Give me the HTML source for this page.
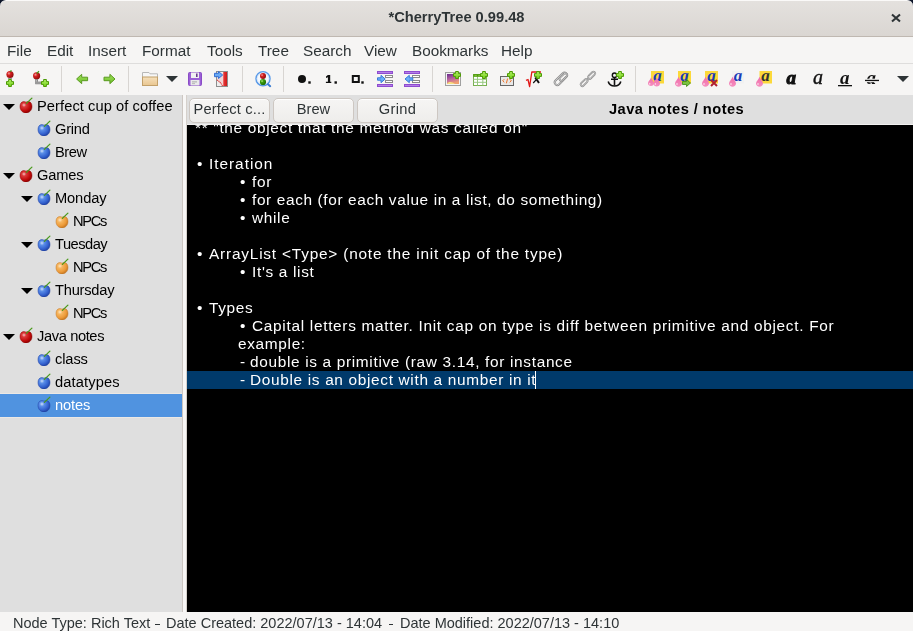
<!DOCTYPE html>
<html><head><meta charset="utf-8">
<style>
*{margin:0;padding:0;box-sizing:border-box}
html,body{width:913px;height:631px;overflow:hidden;background:#f6f5f4;font-family:"Liberation Sans",sans-serif;color:#2e3436}
.a{position:absolute}
.g{will-change:transform}
#title{left:0;top:0;width:913px;height:37px;background:linear-gradient(#e4e1de,#dad6d2);border-top:1px solid #faf9f8;border-bottom:1px solid #bfb8b1;border-radius:6px 6px 0 0}
#corner{left:0;top:0;width:913px;height:6px;background:#0c1428}
#ttext{left:0;top:9px;width:913px;text-align:center;font-weight:bold;font-size:14.67px;color:#2e3436}
#menu{left:0;top:37px;width:913px;height:27px;background:#f6f5f4;border-bottom:1px solid #dedddc}
.mi{top:42px;font-size:15.3px;color:#2e3436}
#tb{left:0;top:64px;width:913px;height:31px;background:#f6f5f4}
#tree{left:0;top:95px;width:182px;height:517px;background:#dfdfdf}
.tt{font-size:14.67px;line-height:22px;white-space:pre;color:#000}
#pane1{left:182px;top:95px;width:1px;height:517px;background:#cdc7c2}
#pane2{left:183px;top:95px;width:3px;height:517px;background:#f8f7f6}
#pane3{left:186px;top:95px;width:1px;height:517px;background:#d5d0cb}
#rhead{left:187px;top:95px;width:726px;height:30px;background:#dfdfdf}
.btn{top:98px;height:25px;border:1px solid #cdc7c2;border-radius:5px;background:linear-gradient(#f6f5f4,#eeedeb);box-shadow:inset 0 1px #fff}
.bt{top:99px;height:23px;font-size:14.67px;text-align:center;color:#2e3436;line-height:20px}
#edit{left:187px;top:125px;width:726px;height:487px;background:#000;overflow:hidden}
.ln{height:18px;font-size:15.4px;line-height:18px;color:#fff;white-space:pre;letter-spacing:0.67px}
#status{left:0;top:612px;width:913px;height:19px;background:#f6f5f4}
.st{top:615px;font-size:14.5px;color:#2e3436;white-space:pre}
</style></head><body>
<svg width="0" height="0" style="position:absolute">
<defs>
<radialGradient id="gr" cx="0.33" cy="0.3" r="0.8"><stop offset="0" stop-color="#f4c4c4"/><stop offset="0.22" stop-color="#dc3a3a"/><stop offset="0.65" stop-color="#c00a0a"/><stop offset="1" stop-color="#7a0000"/></radialGradient>
<radialGradient id="gb" cx="0.33" cy="0.3" r="0.8"><stop offset="0" stop-color="#d0e0f8"/><stop offset="0.25" stop-color="#5a8ee8"/><stop offset="0.65" stop-color="#3462d0"/><stop offset="1" stop-color="#1a3a98"/></radialGradient>
<radialGradient id="go" cx="0.33" cy="0.3" r="0.8"><stop offset="0" stop-color="#fde8c8"/><stop offset="0.25" stop-color="#f6b660"/><stop offset="0.65" stop-color="#ec9a38"/><stop offset="1" stop-color="#b86a18"/></radialGradient>
<symbol id="chr" viewBox="0 0 16 16"><path d="M8 5.2C6 3.9 2 4.5 2 9.5 2 13.5 5 16 8 16s6-2.5 6-6.5C14 4.5 10 3.9 8 5.2Z" fill="url(#gr)" stroke="#900a0a" stroke-width="0.5"/><path d="M8.4 6.4L13.9 1.1" stroke="#4a9a1c" stroke-width="1.3" stroke-linecap="round"/></symbol>
<symbol id="chb" viewBox="0 0 16 16"><path d="M8 5.2C6 3.9 2 4.5 2 9.5 2 13.5 5 16 8 16s6-2.5 6-6.5C14 4.5 10 3.9 8 5.2Z" fill="url(#gb)" stroke="#2040a0" stroke-width="0.5"/><path d="M8.4 6.4L13.9 1.1" stroke="#4a9a1c" stroke-width="1.3" stroke-linecap="round"/></symbol>
<symbol id="cho" viewBox="0 0 16 16"><path d="M8 5.2C6 3.9 2 4.5 2 9.5 2 13.5 5 16 8 16s6-2.5 6-6.5C14 4.5 10 3.9 8 5.2Z" fill="url(#go)" stroke="#c07a30" stroke-width="0.5"/><path d="M8.4 6.4L13.9 1.1" stroke="#4a9a1c" stroke-width="1.3" stroke-linecap="round"/></symbol>
</defs></svg>

<div class="a" id="corner"></div>
<div class="a" id="title"></div>
<div class="a g" id="ttext">*CherryTree 0.99.48</div>
<svg class="a" style="left:888px;top:10px" width="16" height="16"><path d="M4 4.5L12 11.5M12 4.5L4 11.5" stroke="#2e3436" stroke-width="2.1"/></svg>
<div class="a" id="menu"></div>
<div class="a g mi" style="left:6.5px">File</div>
<div class="a g mi" style="left:46.5px">Edit</div>
<div class="a g mi" style="left:88px">Insert</div>
<div class="a g mi" style="left:142px">Format</div>
<div class="a g mi" style="left:206.5px">Tools</div>
<div class="a g mi" style="left:257.5px">Tree</div>
<div class="a g mi" style="left:303px">Search</div>
<div class="a g mi" style="left:364px">View</div>
<div class="a g mi" style="left:412px">Bookmarks</div>
<div class="a g mi" style="left:501px">Help</div>
<div class="a" id="tb"></div>
<svg class="a" style="left:0;top:64px" width="913" height="31" viewBox="0 64 913 31">
<defs>
<linearGradient id="pg" x1="0" y1="0" x2="0" y2="1"><stop offset="0" stop-color="#b4f06a"/><stop offset="1" stop-color="#73d216"/></linearGradient>
<symbol id="plus" viewBox="0 0 8 8" overflow="visible"><path d="M2.6 0.5h2.8v2.1h2.1v2.8h-2.1v2.1h-2.8v-2.1h-2.1v-2.8h2.1z" fill="url(#pg)" stroke="#4e9a06" stroke-width="1"/></symbol>
<radialGradient id="tr" cx="0.35" cy="0.35" r="0.7"><stop offset="0" stop-color="#f5a0a0"/><stop offset="0.35" stop-color="#d42020"/><stop offset="1" stop-color="#8c0a0a"/></radialGradient>
<radialGradient id="tg" cx="0.35" cy="0.35" r="0.7"><stop offset="0" stop-color="#b0f080"/><stop offset="0.35" stop-color="#3a9a10"/><stop offset="1" stop-color="#1a6a00"/></radialGradient>
<linearGradient id="arr" x1="0" y1="0" x2="0" y2="1"><stop offset="0" stop-color="#a0dc60"/><stop offset="0.5" stop-color="#86d040"/><stop offset="1" stop-color="#6cbc2c"/></linearGradient>
<linearGradient id="fold" x1="0" y1="0" x2="0" y2="1"><stop offset="0" stop-color="#f6e0bc"/><stop offset="1" stop-color="#e9c690"/></linearGradient>
<linearGradient id="img" x1="0" y1="0" x2="0.3" y2="1"><stop offset="0" stop-color="#6a2a90"/><stop offset="0.6" stop-color="#c06aa0"/><stop offset="1" stop-color="#f0a070"/></linearGradient>
<linearGradient id="pink" x1="0" y1="0" x2="0" y2="1"><stop offset="0" stop-color="#f06aa8"/><stop offset="1" stop-color="#f590c0"/></linearGradient>
<symbol id="drop" viewBox="0 0 7 10" overflow="visible"><path d="M3.5 0C3 2.5 0 4.5 0 6.7 0 8.6 1.6 10 3.5 10S7 8.6 7 6.7C7 4.5 4 2.5 3.5 0Z" fill="url(#pink)"/><ellipse cx="2" cy="7.3" rx="0.8" ry="1.1" fill="#fbd0e4"/></symbol>
</defs>
<!-- node add -->
<circle cx="10" cy="74.5" r="3.6" fill="url(#tr)"/>
<path d="M10 71.5l1.5-1" stroke="#3c9a1c" stroke-width="1.2"/>
<rect x="8" y="78" width="4" height="1" fill="#999"/>
<use href="#plus" x="6" y="79" width="8" height="8"/>
<!-- subnode add -->
<circle cx="36.6" cy="75.8" r="3.6" fill="url(#tr)"/>
<path d="M36.8 73.5l2.2-2.3" stroke="#3c9a1c" stroke-width="1.2"/>
<rect x="35.3" y="79" width="1.2" height="5" fill="#777"/>
<rect x="37" y="79" width="1" height="3" fill="#888"/>
<rect x="35.3" y="81.5" width="6.5" height="2.8" fill="#999"/>
<use href="#plus" x="41" y="79" width="8" height="8"/>
<rect x="61" y="66" width="1" height="26" fill="#d8d5d2"/>
<!-- arrows -->
<path d="M76.6 79L81.7 74.3V77.2H87.6V80.7H81.7V83.7Z" fill="url(#arr)" stroke="#5a9a20" stroke-width="1" stroke-linejoin="round"/>
<path d="M76.6 79L81.7 74.3V77.2H87.6V80.7H81.7V83.7Z" transform="translate(191.6 0) scale(-1 1)" fill="url(#arr)" stroke="#5a9a20" stroke-width="1" stroke-linejoin="round"/>
<rect x="128" y="66" width="1" height="26" fill="#d8d5d2"/>
<!-- folder -->
<path d="M142.5 85.5V72.5H149L150 73.8H157.5V85.5Z" fill="#f7f7f7" stroke="#b8b8b8" stroke-width="1"/>
<rect x="142.5" y="77" width="15" height="8.5" fill="url(#fold)" stroke="#c2a06a" stroke-width="1"/>
<path d="M166 76H178L172 82Z" fill="#2e3436"/>
<!-- floppy -->
<rect x="188.5" y="72.5" width="13" height="13" rx="1" fill="#9b5fd6" stroke="#8a4cc6" stroke-width="1"/>
<rect x="191" y="72.5" width="8" height="5.5" fill="#f0f0f0"/>
<rect x="196" y="73.5" width="1.6" height="3.5" fill="#6a3a90"/>
<rect x="190.5" y="80" width="9" height="5.5" fill="#eaeaea"/>
<rect x="192" y="81.5" width="5" height="0.8" fill="#999"/>
<rect x="192" y="83.3" width="3" height="0.8" fill="#aaa"/>
<!-- export -->
<linearGradient id="redb" x1="0" y1="0" x2="1" y2="0"><stop offset="0" stop-color="#f08080"/><stop offset="0.35" stop-color="#e03030"/><stop offset="1" stop-color="#d01818"/></linearGradient>
<rect x="216.5" y="71.5" width="11" height="15" fill="#eeeeee" stroke="#8e8e8e" stroke-width="1"/>
<path d="M217 78L223 73V86Z" fill="#f2d4d4"/>
<rect x="223" y="72" width="4" height="14" fill="url(#redb)"/>
<path d="M217 80Q220.5 82 222.5 86" stroke="#e03030" stroke-width="1.1" fill="none" stroke-dasharray="1.2 0.6"/>
<path d="M214.5 73.3H218.5V71.5L222.7 75L218.5 78.5V76.7H214.5Z" fill="#6aaaf4" stroke="#2a66d0" stroke-width="0.9" stroke-linejoin="round"/>
<rect x="242" y="66" width="1" height="26" fill="#d8d5d2"/>
<!-- find -->
<circle cx="263" cy="78.7" r="7" fill="#f4f8fd" stroke="#5a9ae8" stroke-width="1.5"/>
<circle cx="263" cy="78.7" r="5.9" fill="none" stroke="#cfe2f8" stroke-width="0.8"/>
<path d="M268 84.3l2.2 1.9" stroke="#3a7ad0" stroke-width="2" stroke-linecap="round"/>
<circle cx="263" cy="76" r="3" fill="url(#tr)"/>
<circle cx="263" cy="82" r="3.1" fill="url(#tg)"/>
<rect x="283" y="66" width="1" height="26" fill="#d8d5d2"/>
<!-- list icons -->
<circle cx="302" cy="79" r="4" fill="#111"/>
<rect x="308.3" y="81.3" width="2.4" height="2.4" fill="#111"/>
<path d="M327.9 75H330.2V81.7H331.3V83H325.9V81.7H327.9V77.3L326 78V76.5Z" fill="#111"/>
<rect x="334.5" y="81.3" width="2.4" height="2.4" fill="#111"/>
<rect x="352.8" y="76" width="6" height="6" fill="none" stroke="#111" stroke-width="2"/>
<rect x="361.3" y="81.3" width="2.4" height="2.4" fill="#111"/>
<!-- indent -->
<rect x="377.5" y="71.5" width="15" height="2" fill="#b47ee6" stroke="#8e4cd0" stroke-width="1"/>
<rect x="377.5" y="84.5" width="15" height="2" fill="#b47ee6" stroke="#8e4cd0" stroke-width="1"/>
<rect x="385.5" y="75.5" width="7" height="2" fill="#fff" stroke="#8a8a8a" stroke-width="1"/>
<rect x="385.5" y="80.5" width="7" height="2" fill="#fff" stroke="#8a8a8a" stroke-width="1"/>
<path d="M377.5 77.8H381V75.3L385.2 79L381 82.7V80.2H377.5Z" fill="#6ab0f8" stroke="#3a7ad8" stroke-width="1" stroke-linejoin="round"/>
<rect x="404.5" y="71.5" width="15" height="2" fill="#b47ee6" stroke="#8e4cd0" stroke-width="1"/>
<rect x="404.5" y="84.5" width="15" height="2" fill="#b47ee6" stroke="#8e4cd0" stroke-width="1"/>
<rect x="412.5" y="75.5" width="7" height="2" fill="#fff" stroke="#8a8a8a" stroke-width="1"/>
<rect x="412.5" y="80.5" width="7" height="2" fill="#fff" stroke="#8a8a8a" stroke-width="1"/>
<path d="M412.8 77.8H409.3V75.3L405 79L409.3 82.7V80.2H412.8Z" fill="#6ab0f8" stroke="#3a7ad8" stroke-width="1" stroke-linejoin="round"/>
<rect x="432" y="66" width="1" height="26" fill="#d8d5d2"/>
<!-- image -->
<rect x="445.5" y="72.5" width="15" height="13" fill="#f4f4f4" stroke="#a0a0a0" stroke-width="1"/>
<rect x="447" y="74" width="12" height="10" fill="url(#img)"/>
<path d="M447 84C449 81 452 82 455 84Z" fill="#f8e080"/>
<use href="#plus" x="453" y="71" width="8" height="8"/>
<!-- table -->
<rect x="473.5" y="74.5" width="13" height="11" fill="#fff" stroke="#78b050" stroke-width="1"/>
<path d="M477.5 76.5v9M482.8 76.5v9M473.5 79.3h13M473.5 82.3h13" stroke="#98c880" stroke-width="1"/>
<rect x="473.3" y="74.2" width="13.4" height="2.6" fill="#4e9a06"/>
<path d="M474.5 75.6h2.3M478.3 75.6h2.3" stroke="#8fd050" stroke-width="0.8"/>
<use href="#plus" x="480" y="71" width="8" height="8"/>
<!-- codebox -->
<rect x="500.5" y="76.5" width="13" height="9" fill="#e8e8e8" stroke="#666" stroke-width="1"/>
<path d="M504.3 79.2l-1.6 1.6 1.6 1.6M509.7 79.2l1.6 1.6-1.6 1.6M507.6 78.5l-1.2 4.8" stroke="#f07020" stroke-width="1" fill="none"/>
<use href="#plus" x="507" y="71" width="8" height="8"/>
<!-- latex -->
<path d="M526 80.3L528 79.5L529.6 86.6L531.8 72H541" stroke="#e01818" stroke-width="1.3" fill="none" stroke-linejoin="round"/>
<path d="M535.2 77.5Q537 80 539 83" stroke="#111" stroke-width="2" fill="none"/>
<path d="M533.2 83L536.5 79.5" stroke="#111" stroke-width="1.1"/>
<use href="#plus" x="534" y="71" width="8" height="8"/>
<!-- links -->
<g fill="none">
<rect x="558.30" y="71.20" width="5.2" height="15.2" rx="2.6" transform="rotate(45 560.9 78.8)" stroke="#8c8c8c" stroke-width="2.0"/>
<rect x="558.30" y="71.20" width="5.2" height="15.2" rx="2.6" transform="rotate(45 560.9 78.8)" stroke="#eeeeee" stroke-width="0.6"/>
<rect x="561.50" y="72.40" width="3.6" height="9.2" rx="1.8" transform="rotate(45 563.3 77.0)" stroke="#8c8c8c" stroke-width="1.8"/>
<rect x="561.50" y="72.40" width="3.6" height="9.2" rx="1.8" transform="rotate(45 563.3 77.0)" stroke="#eeeeee" stroke-width="0.5"/>
<path d="M586.6 80.2L589.2 77.6" stroke="#999" stroke-width="1.6"/>
<rect x="589.90" y="71.00" width="3.4" height="8.6" rx="1.7" transform="rotate(45 591.6 75.3)" stroke="#8c8c8c" stroke-width="1.8"/>
<rect x="589.90" y="71.00" width="3.4" height="8.6" rx="1.7" transform="rotate(45 591.6 75.3)" stroke="#eeeeee" stroke-width="0.5"/>
<rect x="582.50" y="78.30" width="3.4" height="8.6" rx="1.7" transform="rotate(45 584.2 82.6)" stroke="#8c8c8c" stroke-width="1.8"/>
<rect x="582.50" y="78.30" width="3.4" height="8.6" rx="1.7" transform="rotate(45 584.2 82.6)" stroke="#eeeeee" stroke-width="0.5"/>
</g>
<!-- anchor -->
<g stroke="#111" fill="none">
<circle cx="614.5" cy="75.2" r="2.2" stroke-width="1.4"/>
<path d="M614.5 77.3V85.5M611 79.3H618" stroke-width="1.6"/>
<path d="M608.2 81.5Q609.5 86 614.5 86Q619.5 86 620.8 81.5" stroke-width="1.6"/>
</g>
<use href="#plus" x="616" y="71" width="8" height="8"/>
<rect x="635" y="66" width="1" height="26" fill="#d8d5d2"/>
<!-- color icons -->
<rect x="651" y="71" width="13" height="12.5" fill="#fcd93a"/>
<text x="653.2" y="81.3" font-family="Liberation Serif" font-style="italic" font-weight="bold" font-size="17" fill="#1a3ab8">a</text>
<use href="#drop" x="648" y="76.3" width="6" height="11"/>
<use href="#drop" x="653.5" y="76.3" width="6.5" height="11"/>
<rect x="678" y="71" width="13" height="12.5" fill="#fcd93a"/>
<text x="680.2" y="81.3" font-family="Liberation Serif" font-style="italic" font-weight="bold" font-size="17" fill="#1a3ab8">a</text>
<use href="#drop" x="675" y="76.3" width="7" height="11"/>
<path d="M682.5 81.5h4v-2l4 3.5-4 3.5v-2h-4z" fill="#7ac040" stroke="#3a8a10" stroke-width="0.8"/>
<rect x="705" y="71" width="13" height="12.5" fill="#fcd93a"/>
<text x="707.2" y="81.3" font-family="Liberation Serif" font-style="italic" font-weight="bold" font-size="17" fill="#1a3ab8">a</text>
<use href="#drop" x="702" y="76.3" width="7" height="11"/>
<path d="M711 80l6 6M717 80l-6 6" stroke="#b02030" stroke-width="2"/>
<rect x="732" y="71" width="12" height="12.5" fill="#eeeeee" opacity="0.6"/>
<text x="733.7" y="81.3" font-family="Liberation Serif" font-style="italic" font-weight="bold" font-size="17" fill="#1a3ab8">a</text>
<use href="#drop" x="729" y="76.3" width="7" height="11"/>
<rect x="759.5" y="71" width="12.5" height="12.5" fill="#fcd93a"/>
<text x="761.2" y="81.3" font-family="Liberation Serif" font-style="italic" font-weight="bold" font-size="17" fill="#333">a</text>
<use href="#drop" x="756" y="76.3" width="7" height="11"/>
<!-- text style -->
<text x="786.5" y="84" font-family="Liberation Serif" font-style="italic" font-weight="bold" font-size="19" fill="#111" stroke="#111" stroke-width="1">a</text>
<text x="813" y="84" font-family="Liberation Serif" font-style="italic" font-size="20" fill="#111" stroke="#111" stroke-width="0.4">a</text>
<text x="840" y="84" font-family="Liberation Serif" font-style="italic" font-weight="bold" font-size="19" fill="#111">a</text>
<rect x="838" y="85" width="14" height="1.3" fill="#111"/>
<text x="866.5" y="84" font-family="Liberation Serif" font-style="italic" font-weight="bold" font-size="19" fill="#111">a</text>
<rect x="864.5" y="78.7" width="15" height="3.5" fill="#f6f5f4"/>
<rect x="865" y="79.8" width="14" height="1.3" fill="#111"/>
<path d="M897 76H909L903 82Z" fill="#2e3436"/>
</svg>
<div class="a" id="tree"></div>
<svg class="a" style="left:3px;top:104px" width="12" height="6"><path d="M0 0H12L6 6Z" fill="#000"/></svg>
<svg class="a" style="left:18px;top:97px" width="16" height="16"><use href="#chr"/></svg>
<div class="a g tt" style="left:37px;top:95px;letter-spacing:0.07px">Perfect cup of coffee</div>
<svg class="a" style="left:36px;top:120px" width="16" height="16"><use href="#chb"/></svg>
<div class="a g tt" style="left:55px;top:118px;letter-spacing:-0.25px">Grind</div>
<svg class="a" style="left:36px;top:143px" width="16" height="16"><use href="#chb"/></svg>
<div class="a g tt" style="left:55px;top:141px;letter-spacing:-0.45px">Brew</div>
<svg class="a" style="left:3px;top:173px" width="12" height="6"><path d="M0 0H12L6 6Z" fill="#000"/></svg>
<svg class="a" style="left:18px;top:166px" width="16" height="16"><use href="#chr"/></svg>
<div class="a g tt" style="left:37px;top:164px;letter-spacing:-0.15px">Games</div>
<svg class="a" style="left:21px;top:196px" width="12" height="6"><path d="M0 0H12L6 6Z" fill="#000"/></svg>
<svg class="a" style="left:36px;top:189px" width="16" height="16"><use href="#chb"/></svg>
<div class="a g tt" style="left:55px;top:187px;letter-spacing:-0.12px">Monday</div>
<svg class="a" style="left:54px;top:212px" width="16" height="16"><use href="#cho"/></svg>
<div class="a g tt" style="left:73px;top:210px;letter-spacing:-1.3px">NPCs</div>
<svg class="a" style="left:21px;top:242px" width="12" height="6"><path d="M0 0H12L6 6Z" fill="#000"/></svg>
<svg class="a" style="left:36px;top:235px" width="16" height="16"><use href="#chb"/></svg>
<div class="a g tt" style="left:55px;top:233px;letter-spacing:-0.5px">Tuesday</div>
<svg class="a" style="left:54px;top:258px" width="16" height="16"><use href="#cho"/></svg>
<div class="a g tt" style="left:73px;top:256px;letter-spacing:-1.3px">NPCs</div>
<svg class="a" style="left:21px;top:288px" width="12" height="6"><path d="M0 0H12L6 6Z" fill="#000"/></svg>
<svg class="a" style="left:36px;top:281px" width="16" height="16"><use href="#chb"/></svg>
<div class="a g tt" style="left:55px;top:279px;letter-spacing:-0.22px">Thursday</div>
<svg class="a" style="left:54px;top:304px" width="16" height="16"><use href="#cho"/></svg>
<div class="a g tt" style="left:73px;top:302px;letter-spacing:-1.3px">NPCs</div>
<svg class="a" style="left:3px;top:334px" width="12" height="6"><path d="M0 0H12L6 6Z" fill="#000"/></svg>
<svg class="a" style="left:18px;top:327px" width="16" height="16"><use href="#chr"/></svg>
<div class="a g tt" style="left:37px;top:325px;letter-spacing:-0.38px">Java notes</div>
<svg class="a" style="left:36px;top:350px" width="16" height="16"><use href="#chb"/></svg>
<div class="a g tt" style="left:55px;top:348px;letter-spacing:-0.12px">class</div>
<svg class="a" style="left:36px;top:373px" width="16" height="16"><use href="#chb"/></svg>
<div class="a g tt" style="left:55px;top:371px;letter-spacing:0.12px">datatypes</div>
<div class="a" style="left:0;top:393px;width:182px;height:25px;background:#ebe8e5"></div>
<div class="a" style="left:0;top:394px;width:182px;height:23px;background:#5093e0"></div>
<svg class="a" style="left:36px;top:396px" width="16" height="16"><use href="#chb"/></svg>
<div class="a g tt" style="left:55px;top:394px;letter-spacing:-0.15px;color:#fff">notes</div>
<div class="a" id="pane1"></div>
<div class="a" id="pane2"></div>
<div class="a" id="pane3"></div>
<div class="a" id="rhead"></div>
<div class="a" style="left:187px;top:124px;width:726px;height:1px;background:#f2f1f0"></div>
<div class="a btn" style="left:189px;width:81px"></div>
<div class="a btn" style="left:273px;width:81px"></div>
<div class="a btn" style="left:357px;width:81px"></div>
<div class="a g bt" style="left:189px;width:81px;letter-spacing:0.15px">Perfect c...</div>
<div class="a g bt" style="left:273px;width:81px">Brew</div>
<div class="a g bt" style="left:357px;width:81px;letter-spacing:0.3px">Grind</div>
<div class="a g" style="left:609px;top:101px;font-size:14.67px;font-weight:bold;color:#000;letter-spacing:0.45px">Java notes / notes</div>
<div class="a" id="edit">
<div class="a" style="left:0;top:246px;width:726px;height:18px;background:#003a6b"></div>
<div class="a g ln" style="left:8px;top:-6px">** &quot;the object that the method was called on&quot;</div>
<div class="a g ln" style="left:10px;top:30px">•</div>
<div class="a g ln" style="left:22px;top:30px;letter-spacing:0.97px">Iteration</div>
<div class="a g ln" style="left:53px;top:48px">•</div>
<div class="a g ln" style="left:65px;top:48px">for</div>
<div class="a g ln" style="left:53px;top:66px">•</div>
<div class="a g ln" style="left:65px;top:66px;letter-spacing:0.63px">for each (for each value in a list, do something)</div>
<div class="a g ln" style="left:53px;top:84px">•</div>
<div class="a g ln" style="left:65px;top:84px">while</div>
<div class="a g ln" style="left:10px;top:120px">•</div>
<div class="a g ln" style="left:22px;top:120px;letter-spacing:0.8px">ArrayList &lt;Type&gt; (note the init cap of the type)</div>
<div class="a g ln" style="left:53px;top:138px">•</div>
<div class="a g ln" style="left:65px;top:138px">It&#x27;s a list</div>
<div class="a g ln" style="left:10px;top:174px">•</div>
<div class="a g ln" style="left:22px;top:174px">Types</div>
<div class="a g ln" style="left:53px;top:192px">•</div>
<div class="a g ln" style="left:65px;top:192px;letter-spacing:0.7px">Capital letters matter. Init cap on type is diff between primitive and object. For</div>
<div class="a g ln" style="left:51px;top:210px">example:</div>
<div class="a g ln" style="left:53px;top:228px">-</div>
<div class="a g ln" style="left:63px;top:228px">double is a primitive (raw 3.14, for instance</div>
<div class="a g ln" style="left:53px;top:246px">-</div>
<div class="a g ln" style="left:63px;top:246px">Double is an object with a number in it</div>
<div class="a" style="left:348px;top:246px;width:1px;height:18px;background:#fff"></div>
</div>
<div class="a" id="status"></div>
<div class="a g st" style="left:13px">Node Type: Rich Text</div>
<div class="a" style="left:155px;top:623.6px;width:4.6px;height:1.2px;background:#2e3436"></div>
<div class="a g st" style="left:166px">Date Created: 2022/07/13 - 14:04</div>
<div class="a" style="left:389px;top:623.6px;width:4.2px;height:1.2px;background:#2e3436"></div>
<div class="a g st" style="left:400px">Date Modified: 2022/07/13 - 14:10</div>
</body></html>
